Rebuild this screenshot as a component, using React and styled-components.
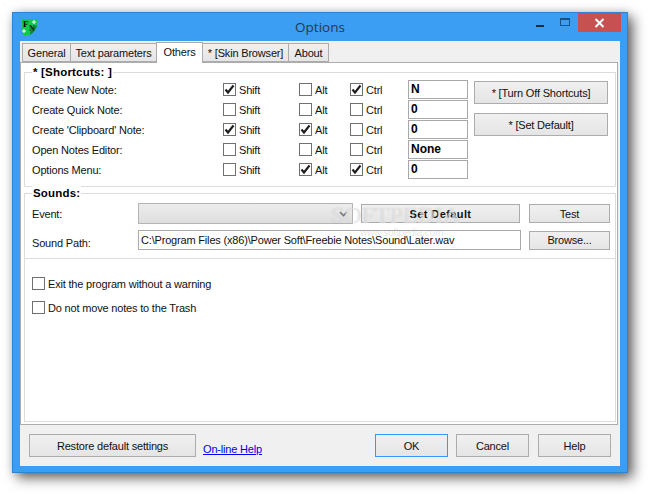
import styled, { createGlobalStyle } from "styled-components";

const GlobalStyle = createGlobalStyle`
  html, body {
    margin: 0;
    padding: 0;
    background: #fff;
  }
  * {
    box-sizing: border-box;
  }
`;

const shortcuts = [
  { label: "Create New Note:", shift: true, alt: false, ctrl: true, key: "N" },
  { label: "Create Quick Note:", shift: false, alt: false, ctrl: false, key: "0" },
  { label: "Create 'Clipboard' Note:", shift: true, alt: true, ctrl: false, key: "0" },
  { label: "Open Notes Editor:", shift: false, alt: false, ctrl: false, key: "None" },
  { label: "Options Menu:", shift: false, alt: true, ctrl: true, key: "0" },
];

function Check({ checked, children }) {
  return (
    <CheckWrap>
      <CheckBox>
        {checked && (
          <svg width="11" height="11" viewBox="0 0 11 11">
            <path d="M1.5 5.5 L4 8.5 L9.5 1.5" fill="none" stroke="#1c1c1c" strokeWidth="2.1" />
          </svg>
        )}
      </CheckBox>
      {children}
    </CheckWrap>
  );
}

function AppIcon() {
  return (
    <svg width="16" height="16" viewBox="0 0 16 16">
      <path d="M0 0 H15 V6 Q14 12 7 16 H2 Q0 13 0 8 Z" fill="#11c94a" />
      <path d="M8 16 Q14 12 15 6 L9 9 Z" fill="#0a8a2c" />
      <text x="1" y="8" fontFamily="Liberation Serif, serif" fontWeight="700" fontSize="9" fill="#000">F</text>
      <text x="7" y="12" fontFamily="Liberation Serif, serif" fontWeight="700" fontSize="8" fill="#123">N</text>
      <path d="M12 1 V5 M10 3 H14 M2 10 V14 M0 12 H4" stroke="#fff" strokeWidth="1" />
    </svg>
  );
}

export default function App() {
  return (
    <Page>
      <GlobalStyle />
      <Window>
        <TitleBar>
          <AppIcon />
          <Title>Options</Title>
          <WinButtons>
            <MinIcon />
            <MaxIcon />
            <CloseButton>
              <svg width="11" height="10" viewBox="0 0 11 10">
                <path d="M1.5 1 L9.5 9 M9.5 1 L1.5 9" stroke="#fff" strokeWidth="2" />
              </svg>
            </CloseButton>
          </WinButtons>
        </TitleBar>
        <Client>
          <TabStrip>
            <Tab $w={49}>General</Tab>
            <Tab $w={87}>Text parameters</Tab>
            <Tab $w={47} $active>Others</Tab>
            <Tab $w={87}>* [Skin Browser]</Tab>
            <Tab $w={41}>About</Tab>
          </TabStrip>
          <Panel>
            <ShortcutsGroup>
              <Legend>* [Shortcuts: ]</Legend>
              <ShortcutsBody>
                <ShortcutRows>
                  {shortcuts.map((s) => (
                    <ShortcutRow key={s.label}>
                      <span>{s.label}</span>
                      <Check checked={s.shift}>Shift</Check>
                      <Check checked={s.alt}>Alt</Check>
                      <Check checked={s.ctrl}>Ctrl</Check>
                      <KeyField>{s.key}</KeyField>
                    </ShortcutRow>
                  ))}
                </ShortcutRows>
                <SideButtons>
                  <Button $h={23}>* [Turn Off Shortcuts]</Button>
                  <Button $h={23}>* [Set Default]</Button>
                </SideButtons>
              </ShortcutsBody>
            </ShortcutsGroup>

            <SoundsGroup>
              <Legend>Sounds:</Legend>
              <SoundRow>
                <FieldLabel>Event:</FieldLabel>
                <Select>
                  <svg width="9" height="6" viewBox="0 0 9 6">
                    <path d="M1 1 L4.5 4.5 L8 1" fill="none" stroke="#777" strokeWidth="1.6" />
                  </svg>
                </Select>
                <Button $w={159} $h={19} $ml={8} $bold>Set Default</Button>
                <Button $w={81} $h={19} $ml={9}>Test</Button>
              </SoundRow>
              <PathRow>
                <FieldLabel $low>Sound Path:</FieldLabel>
                <PathField>C:\Program Files (x86)\Power Soft\Freebie Notes\Sound\Later.wav</PathField>
                <Button $w={81} $h={19} $ml={8}>Browse...</Button>
              </PathRow>
              <Watermark>SOFTPEDIA</Watermark>
              <WatermarkUrl>www.softpedia.com</WatermarkUrl>
            </SoundsGroup>

            <OptionsGroup>
              <Check>Exit the program without a warning</Check>
              <Check>Do not move notes to the Trash</Check>
            </OptionsGroup>
          </Panel>
          <Footer>
            <Button $w={167} $h={23}>Restore default settings</Button>
            <HelpLink href="#">On-line Help</HelpLink>
            <FooterRight>
              <Button $w={73} $h={23} $focused>OK</Button>
              <Button $w={73} $h={23}>Cancel</Button>
              <Button $w={73} $h={23} $ml={1}>Help</Button>
            </FooterRight>
          </Footer>
        </Client>
      </Window>
    </Page>
  );
}

const Page = styled.div`
  width: 648px;
  height: 494px;
  padding: 12px;
  overflow: hidden;
  font-family: "Liberation Sans", Arial, sans-serif;
  font-size: 11px;
  letter-spacing: -0.18px;
  color: #111;
`;

const Window = styled.div`
  width: 616px;
  height: 461px;
  display: flex;
  flex-direction: column;
  background: #3c9ef3;
  border: 1px solid #3083cf;
  box-shadow: 5px 5px 12px rgba(0, 0, 0, 0.6), 0 0 8px rgba(0, 0, 0, 0.12);
`;

const TitleBar = styled.div`
  position: relative;
  height: 28px;
  flex: none;
  display: flex;
  align-items: center;
  padding: 0 0 0 9px;
`;

const Title = styled.div`
  position: absolute;
  left: 0;
  right: 0;
  top: 5px;
  text-align: center;
  font-family: "Open Sans", sans-serif;
  font-size: 13.5px;
  letter-spacing: 0;
  color: #26384a;
`;

const WinButtons = styled.div`
  margin-left: auto;
  margin-right: 6px;
  align-self: flex-start;
  display: flex;
  z-index: 1;
`;

const MinIcon = styled.div`
  width: 8px;
  height: 2px;
  margin: 12px 0 0 0;
  background: #1b2b3a;
`;

const MaxIcon = styled.div`
  width: 10px;
  height: 8px;
  margin: 5px 8px 0 16px;
  border: 1px solid #1f4f7c;
  border-top-width: 2px;
`;

const CloseButton = styled.div`
  width: 43px;
  height: 19px;
  display: flex;
  align-items: center;
  justify-content: center;
  background: #c75050;
`;

const Client = styled.div`
  width: 600px;
  height: 425px;
  margin-left: 7px;
  display: flex;
  flex-direction: column;
  background: #f0f0f0;
`;

const TabStrip = styled.div`
  height: 21px;
  flex: none;
  display: flex;
  align-items: flex-end;
  padding-left: 3px;
  position: relative;
  z-index: 1;
`;

const Tab = styled.div`
  width: ${({ $w }) => $w}px;
  height: ${({ $active }) => ($active ? "21px" : "19px")};
  margin-bottom: ${({ $active }) => ($active ? "-1px" : "0")};
  padding-bottom: ${({ $active }) => ($active ? "3px" : "0")};
  display: flex;
  align-items: center;
  justify-content: center;
  background: ${({ $active }) => ($active ? "#fff" : "linear-gradient(#f0f0f0, #e5e5e5)")};
  border: 1px solid #acacac;
  border-bottom: ${({ $active }) => ($active ? "none" : "1px solid #acacac")};
  margin-left: -1px;
  white-space: nowrap;
`;

const Panel = styled.div`
  width: 598px;
  height: 363px;
  flex: none;
  display: flex;
  flex-direction: column;
  padding: 9px 1px 2px 3px;
  background: #fff;
  border: 1px solid #acacac;
`;

const Group = styled.div`
  position: relative;
  border: 1px solid #dcdcdc;
  padding-left: 7px;
`;

const ShortcutsGroup = styled(Group)`
  height: 115px;
`;

const SoundsGroup = styled(Group)`
  height: 66px;
  margin-top: 6px;
`;

const OptionsGroup = styled(Group)`
  flex: 1;
  margin-top: -1px;
  padding-top: 18px;
  display: flex;
  flex-direction: column;
  gap: 11px;
`;

const Legend = styled.div`
  width: fit-content;
  height: 14px;
  margin: -8px 0 0 0;
  padding: 0 1px;
  background: #fff;
  font-weight: 700;
  font-size: 11.5px;
  letter-spacing: 0.2px;
  line-height: 14px;
  color: #000;
`;

const ShortcutsBody = styled.div`
  display: flex;
  margin-top: 1px;
`;

const ShortcutRows = styled.div`
  display: flex;
  flex-direction: column;
  gap: 1px;
`;

const ShortcutRow = styled.div`
  display: grid;
  grid-template-columns: 191px 76px 51px 58px 60px;
  height: 19px;
  align-items: center;
`;

const CheckWrap = styled.label`
  display: flex;
  align-items: center;
  gap: 3px;
  white-space: nowrap;
`;

const CheckBox = styled.span`
  width: 13px;
  height: 13px;
  flex: none;
  display: flex;
  align-items: center;
  justify-content: center;
  background: #fff;
  border: 1px solid #707070;
`;

const KeyField = styled.div`
  height: 19px;
  padding-left: 2px;
  border: 1px solid #a9a9a9;
  font-weight: 700;
  font-size: 12px;
  letter-spacing: 0;
  line-height: 16px;
  color: #000;
`;

const SideButtons = styled.div`
  display: flex;
  flex-direction: column;
  gap: 9px;
  width: 134px;
  margin: 1px 0 0 6px;
`;

const Button = styled.div`
  width: ${({ $w }) => ($w ? `${$w}px` : "100%")};
  height: ${({ $h }) => $h}px;
  margin-left: ${({ $ml }) => $ml || 0}px;
  flex: none;
  display: flex;
  align-items: center;
  justify-content: center;
  position: relative;
  z-index: 1;
  background: linear-gradient(#f0f0f0, #e5e5e5);
  border: 1px solid ${({ $focused }) => ($focused ? "#3399ff" : "#acacac")};
  font-weight: ${({ $bold }) => ($bold ? 700 : 400)};
  letter-spacing: ${({ $bold }) => ($bold ? "0.4px" : "-0.18px")};
  white-space: nowrap;
  color: #111;
`;

const SoundRow = styled.div`
  display: flex;
  align-items: center;
  height: 21px;
  margin-top: 3px;
`;

const PathRow = styled.div`
  display: flex;
  align-items: center;
  height: 20px;
  margin-top: 6px;
`;

const FieldLabel = styled.div`
  width: 106px;
  flex: none;
  padding-top: ${({ $low }) => ($low ? "6px" : "0")};
`;

const Select = styled.div`
  width: 215px;
  height: 21px;
  flex: none;
  display: flex;
  align-items: center;
  justify-content: flex-end;
  padding-right: 4px;
  background: linear-gradient(#ececec, #dedede);
  border: 1px solid #b4b4b4;
`;

const PathField = styled.div`
  width: 383px;
  height: 20px;
  flex: none;
  padding-left: 2px;
  border: 1px solid #a9a9a9;
  line-height: 18px;
  white-space: nowrap;
  overflow: hidden;
`;

const Watermark = styled.div`
  position: absolute;
  left: 306px;
  top: 8px;
  font-family: "Liberation Serif", serif;
  font-size: 24px;
  line-height: 26px;
  letter-spacing: 0;
  color: rgba(255, 255, 255, 0.55);
  text-shadow: 0 0 1px rgba(120, 120, 120, 0.4);
  z-index: 2;
  pointer-events: none;
`;

const WatermarkUrl = styled.div`
  position: absolute;
  left: 335px;
  top: 33px;
  font-size: 10px;
  color: rgba(150, 150, 150, 0.25);
  z-index: 2;
  pointer-events: none;
`;

const Footer = styled.div`
  flex: 1;
  display: flex;
  align-items: flex-start;
  padding: 9px 9px 0 9px;
`;

const HelpLink = styled.a`
  margin: 9px 0 0 7px;
  color: #0000ee;
  text-decoration: underline;
`;

const FooterRight = styled.div`
  margin-left: auto;
  display: flex;
  gap: 8px;
`;
